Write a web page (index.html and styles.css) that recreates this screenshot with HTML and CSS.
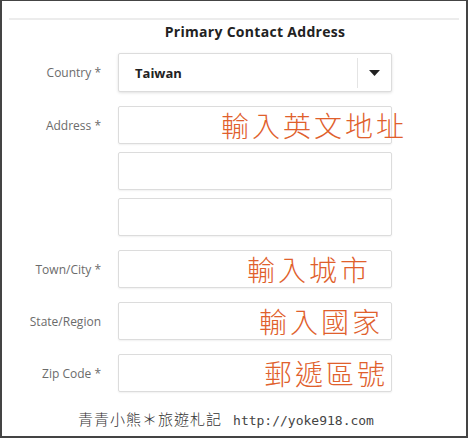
FILE: index.html
```html
<!DOCTYPE html>
<html lang="zh-Hant">
<head>
    <meta charset="UTF-8">
    <meta name="viewport" content="width=device-width, initial-scale=1.0">
    <title>Primary Contact Address</title>
    <link rel="stylesheet" href="styles.css">
</head>
<body>
    <div class="frame">
        <div class="divider"></div>
        <h2 class="title">Primary Contact Address</h2>

        <div class="form">
            <div class="field">
                <span class="label">Country *</span>
                <div class="box select">
                    <span class="select-value">Taiwan</span>
                    <span class="select-toggle">
                        <svg width="11" height="6" viewBox="0 0 11 6"><path d="M0 0 L11 0 L5.5 6 Z" fill="#222"/></svg>
                    </span>
                </div>
            </div>

            <div class="field">
                <span class="label">Address *</span>
                <div class="box"><span class="note note-address">輸入英文地址</span></div>
                <div class="box extra"></div>
                <div class="box extra"></div>
            </div>

            <div class="field">
                <span class="label">Town/City *</span>
                <div class="box"><span class="note note-city">輸入城市</span></div>
            </div>

            <div class="field">
                <span class="label">State/Region</span>
                <div class="box"><span class="note note-state">輸入國家</span></div>
            </div>

            <div class="field">
                <span class="label">Zip Code *</span>
                <div class="box"><span class="note note-zip">郵遞區號</span></div>
            </div>
        </div>

        <p class="credit"><span class="credit-name">青青小熊＊旅遊札記</span><span class="credit-url">http://yoke918.com</span></p>
    </div>
</body>
</html>
```

FILE: styles.css
```css
* {
    margin: 0;
    padding: 0;
    box-sizing: border-box;
}

body {
    background-color: white;
    font-family: "Open Sans", Arial, sans-serif;
}

.frame {
    width: 468px;
    height: 438px;
    border: 2px solid #444;
    border-top-width: 1px;
    background-color: white;
    overflow: hidden;
}

.divider {
    height: 2px;
    margin: 17px 7px 0 7px;
    background-color: #ececec;
}

.title {
    margin: 3px 0 0 0;
    padding-left: 42px;
    text-align: center;
    font-size: 14px;
    line-height: 18px;
    font-weight: 700;
    color: #222;
    letter-spacing: 0.3px;
}

.form {
    margin-top: 12px;
    display: flex;
    flex-direction: column;
    gap: 14px;
}

.field {
    display: grid;
    grid-template-columns: 99px 274px;
    column-gap: 17px;
    row-gap: 8px;
    align-items: center;
}

.field .extra {
    grid-column: 2;
}

.label {
    text-align: right;
    font-size: 12px;
    color: #6b6b6b;
}

.box {
    height: 38px;
    border: 1px solid #dcdcdc;
    border-radius: 2px;
    background-color: white;
    box-shadow: 0 1px 2px rgba(0,0,0,0.06);
    display: flex;
    align-items: center;
    justify-content: flex-end;
}

.select {
    height: 39px;
    justify-content: space-between;
    box-shadow: 0 1px 3px rgba(0,0,0,0.12);
}

.select-value {
    padding-left: 16px;
    font-size: 13px;
    font-weight: 700;
    color: #222;
}

.select-toggle {
    width: 34px;
    height: 30px;
    border-left: 1px solid #e4e4e4;
    display: flex;
    align-items: center;
    justify-content: center;
}

/* orange hints written over the inputs */
.note {
    font-family: "Noto Sans CJK TC", "Noto Sans CJK SC", sans-serif;
    font-weight: 300;
    font-size: 28px;
    line-height: 1;
    letter-spacing: 3px;
    color: #e0602c;
    white-space: nowrap;
}

.note-address {
    margin-right: -16px;
}

.note-city {
    margin-right: 20px;
}

.note-state {
    margin-right: 8px;
}

.note-zip {
    margin-right: 3px;
}

.credit {
    margin-top: 16px;
    padding-right: 16px;
    text-align: center;
    color: #333;
}

.credit-name {
    font-family: "Noto Sans CJK TC", sans-serif;
    font-weight: 300;
    font-size: 15px;
    letter-spacing: 1px;
}

.credit-url {
    margin-left: 11px;
    font-family: "DejaVu Sans Mono", monospace;
    font-size: 13px;
    color: #444;
}
```
